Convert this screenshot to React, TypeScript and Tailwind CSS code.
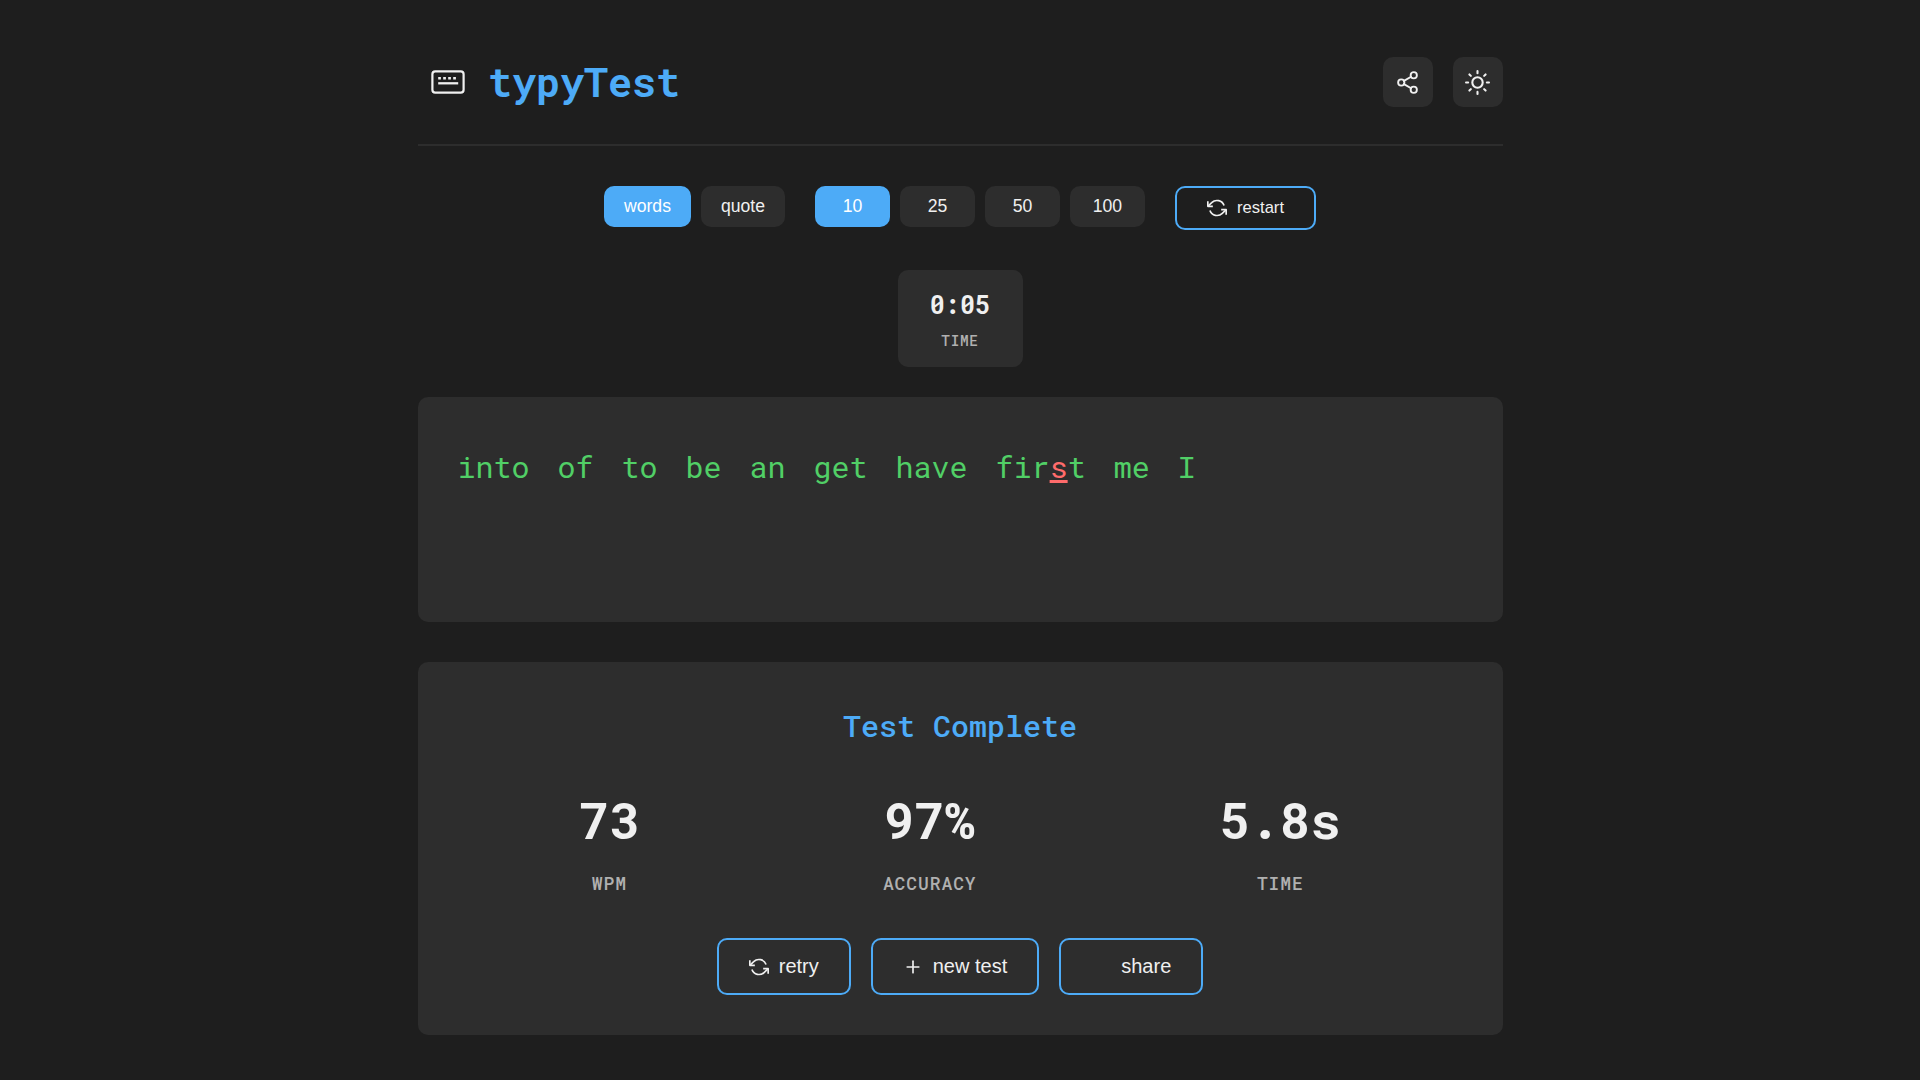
import { Fragment } from "react";
import { FiShare2, FiSun, FiRefreshCcw, FiPlus } from "react-icons/fi";

const mono = "font-['Roboto_Mono','DejaVu_Sans_Mono',monospace]";
const sans = "font-['Liberation_Sans',Arial,sans-serif]";

const words = ["into", "of", "to", "be", "an", "get", "have", "first", "me", "I"];

const stats = [
  { value: "73", label: "WPM" },
  { value: "97%", label: "ACCURACY" },
  { value: "5.8s", label: "TIME" },
];

function KeyboardIcon() {
  return (
    <svg width="34" height="24" viewBox="0 0 34 24" fill="none" className="text-[#f0f0f0]">
      <rect x="1.4" y="1.4" width="31.2" height="21.2" rx="2.8" stroke="currentColor" strokeWidth="2.2" />
      <path d="M7.2 8.2h18" stroke="currentColor" strokeWidth="2.6" strokeDasharray="2.7 2.3" />
      <path d="M7.2 13.3h20" stroke="currentColor" strokeWidth="2.3" />
    </svg>
  );
}

function Option({ label, active, wide }: { label: string; active?: boolean; wide?: boolean }) {
  return (
    <button
      className={`h-[41px] rounded-[10px] text-[17.6px] leading-5 pb-px ${wide ? "w-[75px]" : "px-5"} ${
        active ? "bg-[#4dabf7] text-white" : "bg-[#2d2d2d] text-[#f0f0f0]"
      }`}
    >
      {label}
    </button>
  );
}

export default function App() {
  return (
    <div className={`min-h-screen bg-[#1e1e1e] text-[#f0f0f0] ${mono}`}>
      <div className="mx-auto flex h-[1080px] w-[1085px] flex-col">
        <header className="flex h-[146px] items-start justify-between border-b-2 border-[#2d2d2d] pt-[57px]">
          <div className="flex h-[50px] items-center pl-[13.5px]">
            <KeyboardIcon />
            <h1 className="ml-[23px] text-[40px] font-bold leading-[50px] text-[#4dabf7]">typyTest</h1>
          </div>
          <div className="flex gap-5">
            <button className="flex size-[50px] items-center justify-center rounded-[10px] bg-[#2d2d2d]">
              <FiShare2 size={25} strokeWidth={1.8} />
            </button>
            <button className="flex size-[50px] items-center justify-center rounded-[10px] bg-[#2d2d2d]">
              <FiSun size={25} />
            </button>
          </div>
        </header>

        <div className={`mt-10 flex items-start justify-center gap-[30px] ${sans}`}>
          <div className="flex gap-2.5">
            <Option label="words" active />
            <Option label="quote" />
          </div>
          <div className="flex gap-2.5">
            <Option label="10" active wide />
            <Option label="25" wide />
            <Option label="50" wide />
            <Option label="100" wide />
          </div>
          <button className="flex h-11 w-[141px] items-center justify-center gap-2.5 rounded-[10px] border-2 border-[#4dabf7] text-[16.6px] leading-5">
            <FiRefreshCcw size={20} strokeLinecap="butt" />
            <span className="pb-px">restart</span>
          </button>
        </div>

        <div className="mt-10 flex h-[97px] w-[125px] flex-col items-center self-center rounded-[10px] bg-[#2d2d2d] pt-[18px]">
          <div className="text-[25.2px] font-bold leading-[34px]">0:05</div>
          <div className="mt-[9px] text-[14.4px] font-medium leading-5 tracking-[0.72px] text-[#b0b0b0]">TIME</div>
        </div>

        <div className="mt-[30px] h-[225px] rounded-[10px] bg-[#2d2d2d] px-10 pt-[44px] text-[30px] leading-[52px] text-[#51cf66]">
          <div className="flex gap-7">
            {words.map((word) => (
              <span key={word}>
                {word === "first" ? (
                  <Fragment>
                    fir<span className="text-[#ff6b6b] underline decoration-[3px] underline-offset-[2px]">s</span>t
                  </Fragment>
                ) : (
                  word
                )}
              </span>
            ))}
          </div>
        </div>

        <section className="mt-10 flex h-[373px] flex-col items-center rounded-[10px] bg-[#2d2d2d] px-10 pt-10">
          <h2 className="text-[30px] font-medium leading-[48px] text-[#4dabf7]">Test Complete</h2>
          <div className="mt-[30px] flex w-full justify-around">
            {stats.map((s) => (
              <div key={s.label} className="flex flex-col items-center">
                <div className="text-[50.4px] font-bold leading-[80px]">{s.value}</div>
                <div className="mt-[9px] text-[18px] font-medium leading-[28px] tracking-[0.9px] text-[#b0b0b0]">
                  {s.label}
                </div>
              </div>
            ))}
          </div>
          <div className={`mt-[41px] flex gap-5 text-[20px] leading-6 ${sans}`}>
            <button className="flex h-[57px] items-center gap-2.5 rounded-[10px] border-2 border-[#4dabf7] px-[30px]">
              <FiRefreshCcw size={20} strokeLinecap="butt" />
              <span className="pb-px">retry</span>
            </button>
            <button className="flex h-[57px] items-center gap-2.5 rounded-[10px] border-2 border-[#4dabf7] px-[30px]">
              <FiPlus size={20} />
              <span className="pb-px">new test</span>
            </button>
            <button className="flex h-[57px] items-center gap-2.5 rounded-[10px] border-2 border-[#4dabf7] px-[30px]">
              <span className="size-5" />
              <span className="pb-px">share</span>
            </button>
          </div>
        </section>
      </div>
    </div>
  );
}
